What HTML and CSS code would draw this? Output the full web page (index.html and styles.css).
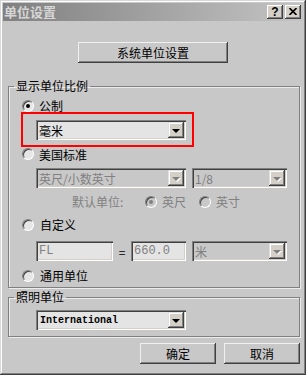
FILE: index.html
```html
<!DOCTYPE html>
<html lang="zh">
<head>
<meta charset="utf-8">
<title>单位设置</title>
<link rel="stylesheet" href="styles.css">
</head>
<body>
<div class="window">
  <div class="titlebar">
    <span class="title">单位设置</span>
    <div class="tb-btns">
      <span class="tb-btn tb-help">?</span>
      <span class="tb-btn tb-close"><svg width="8" height="7" viewBox="0 0 8 7"><path d="M0.5 0 L7.5 7 M7.5 0 L0.5 7" stroke="#000" stroke-width="1.6" fill="none"/></svg></span>
    </div>
  </div>
  <div class="client">
    <div class="btn btn-sys">系统单位设置</div>

    <fieldset class="group g1">
      <legend>显示单位比例</legend>
      <div class="row r-metric"><span class="radio checked"></span><span class="lbl">公制</span></div>
      <div class="highlight">
        <div class="combo w150"><span class="val">毫米</span><span class="drop"></span></div>
      </div>
      <div class="row r-us"><span class="radio"></span><span class="lbl">美国标准</span></div>
      <div class="row r-combos">
        <div class="combo w150 disabled"><span class="val">英尺/小数英寸</span><span class="drop"></span></div>
        <div class="combo w95 disabled"><span class="val">1/8</span><span class="drop"></span></div>
      </div>
      <div class="row r-default">
        <span class="dlabel">默认单位:</span>
        <span class="radio disabled checked"></span><span class="lbl dis">英尺</span>
        <span class="radio disabled r2"></span><span class="lbl dis">英寸</span>
      </div>
      <div class="row r-custom"><span class="radio"></span><span class="lbl lbl6">自定义</span></div>
      <div class="row r-fields">
        <div class="edit w77"><span class="mono">FL</span></div>
        <span class="eq">=</span>
        <div class="edit w55"><span class="mono">660.0</span></div>
        <div class="combo w95 disabled"><span class="val">米</span><span class="drop"></span></div>
      </div>
      <div class="row r-generic"><span class="radio"></span><span class="lbl lbl6">通用单位</span></div>
    </fieldset>

    <fieldset class="group g2">
      <legend>照明单位</legend>
      <div class="row r-light">
        <div class="combo w150"><span class="val mono-dark">International</span><span class="drop"></span></div>
      </div>
    </fieldset>

    <div class="actions">
      <div class="btn btn-act">确定</div>
      <div class="btn btn-act">取消</div>
    </div>
  </div>
</div>
</body>
</html>
```

FILE: styles.css
```css
html, body {
  margin: 0;
  padding: 0;
  background: #c8c8c8;
}

body {
  font-family: "Noto Sans CJK SC", "Liberation Sans", sans-serif;
  font-size: 12px;
  color: #000;
}

.window {
  width: 306px;
  height: 375px;
  box-sizing: border-box;
  padding: 3px;
  background: #c8c8c8;
  box-shadow: inset -1px -1px 0 #404040, inset 1px 1px 0 #d8d8d8,
              inset -2px -2px 0 #808080, inset 2px 2px 0 #ffffff;
  display: flex;
  flex-direction: column;
}

/* title bar */
.titlebar {
  height: 18px;
  background: linear-gradient(to right, #808080, #c4c4c4);
  display: flex;
  align-items: center;
  justify-content: space-between;
}

.title {
  padding-left: 1px;
  font-family: "Noto Sans CJK SC", sans-serif;
  font-weight: 700;
  font-size: 13px;
  line-height: 18px;
  color: #d6d6d6;
}

.tb-btns {
  display: flex;
  gap: 2px;
  padding-right: 2px;
}

.tb-btn {
  width: 16px;
  height: 14px;
  box-sizing: border-box;
  background: #d4d0c8;
  box-shadow: inset -1px -1px 0 #404040, inset 1px 1px 0 #ffffff,
              inset -2px -2px 0 #808080;
  display: flex;
  align-items: center;
  justify-content: center;
}

.tb-help {
  font-family: "Liberation Sans", sans-serif;
  font-weight: 700;
  font-size: 12px;
  line-height: 12px;
  padding-bottom: 1px;
}

.tb-close svg {
  display: block;
  margin-bottom: 1px;
}

/* client area */
.client {
  display: flex;
  flex-direction: column;
  padding: 0 3px 0 5px;
}

.btn {
  box-sizing: border-box;
  height: 21px;
  background: #c8c8c8;
  box-shadow: inset -1px -1px 0 #404040, inset 1px 1px 0 #f0f0f0,
              inset -2px -2px 0 #808080;
  display: flex;
  align-items: center;
  justify-content: center;
  line-height: 13px;
}

.btn-sys {
  width: 150px;
  margin-top: 21px;
  margin-left: 70px;
}

/* group boxes */
.group {
  margin: 0;
  padding: 0;
  min-width: 0;
  border: 1px solid #808080;
  box-shadow: 1px 1px 0 #ececec, inset 1px 1px 0 #ececec;
  display: flex;
  flex-direction: column;
}

.group legend {
  margin-left: 5px;
  padding: 0 2px;
  font-size: 12px;
  line-height: 12px;
}

.g1 {
  margin-top: 17px;
  padding-bottom: 5px;
}

.g2 {
  margin-top: 3px;
  padding-bottom: 6px;
}

.row {
  display: flex;
  align-items: center;
}

.r-metric {
  margin-top: 7px;
  height: 13px;
  margin-left: 13px;
}

.highlight {
  align-self: flex-start;
  margin-left: 12px;
  border: 2px solid #ff0000;
  padding: 6px 6px 5px 13px;
}

.r-us {
  height: 14px;
  margin-left: 13px;
}

.r-combos {
  margin-top: 7px;
  margin-left: 27px;
  gap: 6px;
}

.r-default {
  margin-top: 7px;
  height: 13px;
  margin-left: 63px;
}

.dlabel {
  width: 73px;
  color: #808080;
  line-height: 13px;
}

.r2 {
  margin-left: 13px;
}

.r-custom {
  margin-top: 10px;
  height: 13px;
  margin-left: 13px;
}

.r-fields {
  margin-top: 10px;
  margin-left: 27px;
}

.r-fields .combo {
  margin-left: 6px;
}

.eq {
  width: 18px;
  text-align: center;
  line-height: 13px;
}

.r-generic {
  margin-top: 8px;
  height: 13px;
  margin-left: 13px;
}

.r-light {
  margin-top: 7px;
  margin-left: 27px;
}

/* radios */
.radio {
  width: 12px;
  height: 12px;
  flex: none;
  box-sizing: border-box;
  border-radius: 50%;
  border: 1px solid;
  border-color: #808080 #ffffff #ffffff #808080;
  background: #e6e6e6;
  box-shadow: inset 1px 1px 0 #404040;
  display: flex;
  align-items: center;
  justify-content: center;
}

.radio.disabled {
  background: #c8c8c8;
}

.radio.checked::after {
  content: "";
  width: 4px;
  height: 4px;
  border-radius: 50%;
  background: #000;
}

.radio.disabled.checked::after {
  background: #808080;
}

.lbl {
  margin-left: 5px;
  line-height: 13px;
}

.lbl6 {
  margin-left: 6px;
}

.lbl.dis {
  color: #808080;
}

/* combos */
.combo {
  box-sizing: border-box;
  height: 20px;
  padding: 2px;
  background: #e4e4e4;
  box-shadow: inset 1px 1px 0 #808080, inset 2px 2px 0 #404040,
              inset -1px -1px 0 #ffffff, inset -2px -2px 0 #d4d0c8;
  display: flex;
  align-items: center;
  justify-content: space-between;
}

.combo.disabled {
  background: #c8c8c8;
  color: #808080;
}

.w150 { width: 150px; }
.w95 { width: 95px; }
.w77 { width: 77px; }
.w55 { width: 55px; }

.val {
  padding-left: 1px;
  line-height: 13px;
  white-space: nowrap;
}

.drop {
  width: 16px;
  height: 16px;
  flex: none;
  box-sizing: border-box;
  background: #d4d0c8;
  box-shadow: inset -1px -1px 0 #404040, inset 1px 1px 0 #e0e0e0,
              inset -2px -2px 0 #808080, inset 2px 2px 0 #ffffff;
  display: flex;
  align-items: center;
  justify-content: center;
}

.drop::after {
  content: "";
  width: 0;
  height: 0;
  border-left: 4px solid transparent;
  border-right: 4px solid transparent;
  border-top: 4px solid #000;
  margin-top: 1px;
}

.combo.disabled .drop::after {
  border-top-color: #808080;
  filter: drop-shadow(1px 1px 0 #ffffff);
}

/* edits */
.edit {
  box-sizing: border-box;
  height: 20px;
  padding: 2px 2px 2px 3px;
  background: #e4e4e4;
  box-shadow: inset 1px 1px 0 #808080, inset 2px 2px 0 #404040,
              inset -1px -1px 0 #ffffff, inset -2px -2px 0 #d4d0c8;
  display: flex;
  align-items: center;
  overflow: hidden;
}

.mono {
  font-family: "Liberation Mono", "DejaVu Sans Mono", monospace;
  font-size: 12px;
  color: #808080;
  line-height: 13px;
  white-space: nowrap;
}

.mono-dark {
  font-family: "Liberation Mono", "DejaVu Sans Mono", monospace;
  font-size: 10px;
  font-weight: 700;
  color: #000;
  padding-left: 2px;
}

/* bottom buttons */
.actions {
  display: flex;
  justify-content: flex-end;
  gap: 8px;
  margin-top: 6px;
}

.btn-act {
  width: 76px;
}
```
